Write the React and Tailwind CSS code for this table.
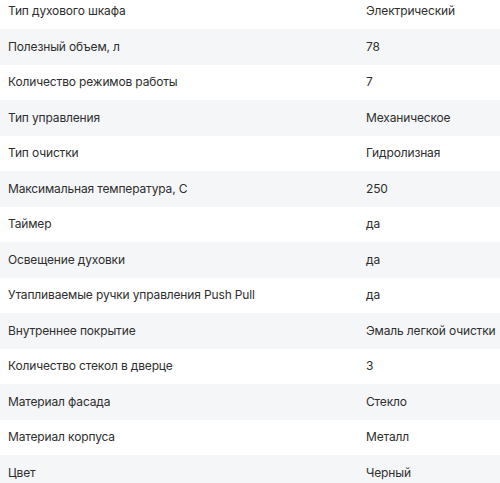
import React from 'react';

const specs = [
  ['Тип духового шкафа', 'Электрический'],
  ['Полезный объем, л', '78'],
  ['Количество режимов работы', '7'],
  ['Тип управления', 'Механическое'],
  ['Тип очистки', 'Гидролизная'],
  ['Максимальная температура, С', '250'],
  ['Таймер', 'да'],
  ['Освещение духовки', 'да'],
  ['Утапливаемые ручки управления Push Pull', 'да'],
  ['Внутреннее покрытие', 'Эмаль легкой очистки'],
  ['Количество стекол в дверце', '3'],
  ['Материал фасада', 'Стекло'],
  ['Материал корпуса', 'Металл'],
  ['Цвет', 'Черный'],
];

const App = () => {
  return (
    <div className="w-[500px] h-[483px] overflow-hidden bg-white" style={{ fontFamily: 'Inter, "Noto Sans", sans-serif' }}>
      <div className="-mt-[6.5px]">
        {specs.map(([label, value], index) => (
          <div
            key={index}
            className={`flex items-center h-[35.5px] text-[12px] tracking-[-0.15px] text-[#2e2e2e] whitespace-nowrap ${index % 2 === 1 ? 'bg-[#f5f6f8]' : 'bg-white'}`}
          >
            <div className="w-[366px] pl-2 shrink-0">{label}</div>
            <div>{value}</div>
          </div>
        ))}
      </div>
    </div>
  );
};

export default App;
